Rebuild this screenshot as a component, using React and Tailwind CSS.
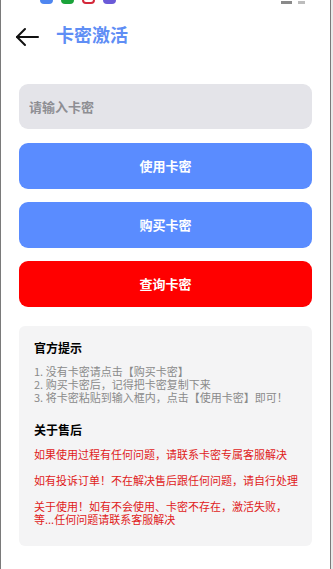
import { useState } from 'react';

// Small partially visible status icons along the top edge
const TopIcons = () => {
  return (
    <div className="flex h-[4px] items-end overflow-hidden">
      <div className="ml-[39px] flex items-end gap-[8px]">
        <span className="block h-[8px] w-[13px] rounded-full bg-[#4f86f0]" />
        <span className="block h-[8px] w-[13px] rounded-full bg-[#1aa33a]" />
        <span className="block h-[8px] w-[13px] rounded-full border-2 border-[#d4283a]" />
        <span className="block h-[8px] w-[13px] rounded-full bg-[#6a5ad8]" />
      </div>
      <div className="ml-auto mr-[25px] flex items-end gap-[6px]">
        <span className="block h-[3px] w-[11px] bg-[#8a8a8a]" />
        <span className="block h-[3px] w-[7px] bg-[#bdbdbd]" />
      </div>
    </div>
  );
};

const BackArrow = () => (
  <svg width="24" height="20" viewBox="0 0 24 20" fill="none" stroke="#111" strokeWidth="2" strokeLinecap="round" strokeLinejoin="round">
    <path d="M23 10H2" />
    <path d="M10 2L2 10l8 8" />
  </svg>
);

const ActionButton = ({ label, color }) => (
  <button
    type="button"
    className={`h-[46px] w-full rounded-[9px] text-[13px] font-bold text-white ${color}`}
  >
    {label}
  </button>
);

export default function App() {
  const [code, setCode] = useState('');

  return (
    <div
      className="flex min-h-[569px] w-[333px] bg-[#e9e9e9]"
      style={{ fontFamily: '"Noto Sans CJK SC", "Noto Sans", sans-serif' }}
    >
      <div className="flex w-[331px] flex-col border-l border-r border-[#7a7a7a] bg-white">
        <TopIcons />

        {/* Header */}
        <header className="flex h-[66px] items-center pb-[1px] pl-[14px]">
          <BackArrow />
          <h1 className="-mt-[5px] ml-[17px] text-[18px] font-bold leading-none text-[#5f8ef5]">卡密激活</h1>
        </header>

        <main className="flex flex-col px-[18px] pt-[14px]">
          <input
            value={code}
            onChange={(e) => setCode(e.target.value)}
            placeholder="请输入卡密"
            className="h-[45px] w-full rounded-[9px] bg-[#e4e4e9] px-[10px] text-[13px] font-bold text-[#333] placeholder-[#8e8e93] focus:outline-none"
          />

          <div className="mt-[14px] flex flex-col gap-[13px]">
            <ActionButton label="使用卡密" color="bg-[#5a8cff]" />
            <ActionButton label="购买卡密" color="bg-[#5a8cff]" />
            <ActionButton label="查询卡密" color="bg-[#ff0000]" />
          </div>

          {/* Notice card */}
          <section className="mt-[19px] rounded-[6px] bg-[#f4f4f5] pb-[20px] pl-[15px] pr-[6px] pt-[14px]">
            <h2 className="text-[12px] font-bold leading-[16px] text-black">官方提示</h2>
            <div className="mt-[9px] text-[11px] leading-[13px] text-[#8a8a8a]">
              <p>1. 没有卡密请点击【购买卡密】</p>
              <p>2. 购买卡密后，记得把卡密复制下来</p>
              <p>3. 将卡密粘贴到输入框内，点击【使用卡密】即可！</p>
            </div>

            <h2 className="mt-[18px] text-[12px] font-bold leading-[16px] text-black">关于售后</h2>
            <div className="mt-[10px] flex flex-col gap-[13px] pr-[10px] text-[11px] leading-[13px] text-[#e01b1b]">
              <p>如果使用过程有任何问题，请联系卡密专属客服解决</p>
              <p className="-mr-[10px] whitespace-nowrap">如有投诉订单！不在解决售后跟任何问题，请自行处理</p>
              <p>关于使用！如有不会使用、卡密不存在，激活失败，等...任何问题请联系客服解决</p>
            </div>
          </section>
        </main>
      </div>
    </div>
  );
}
